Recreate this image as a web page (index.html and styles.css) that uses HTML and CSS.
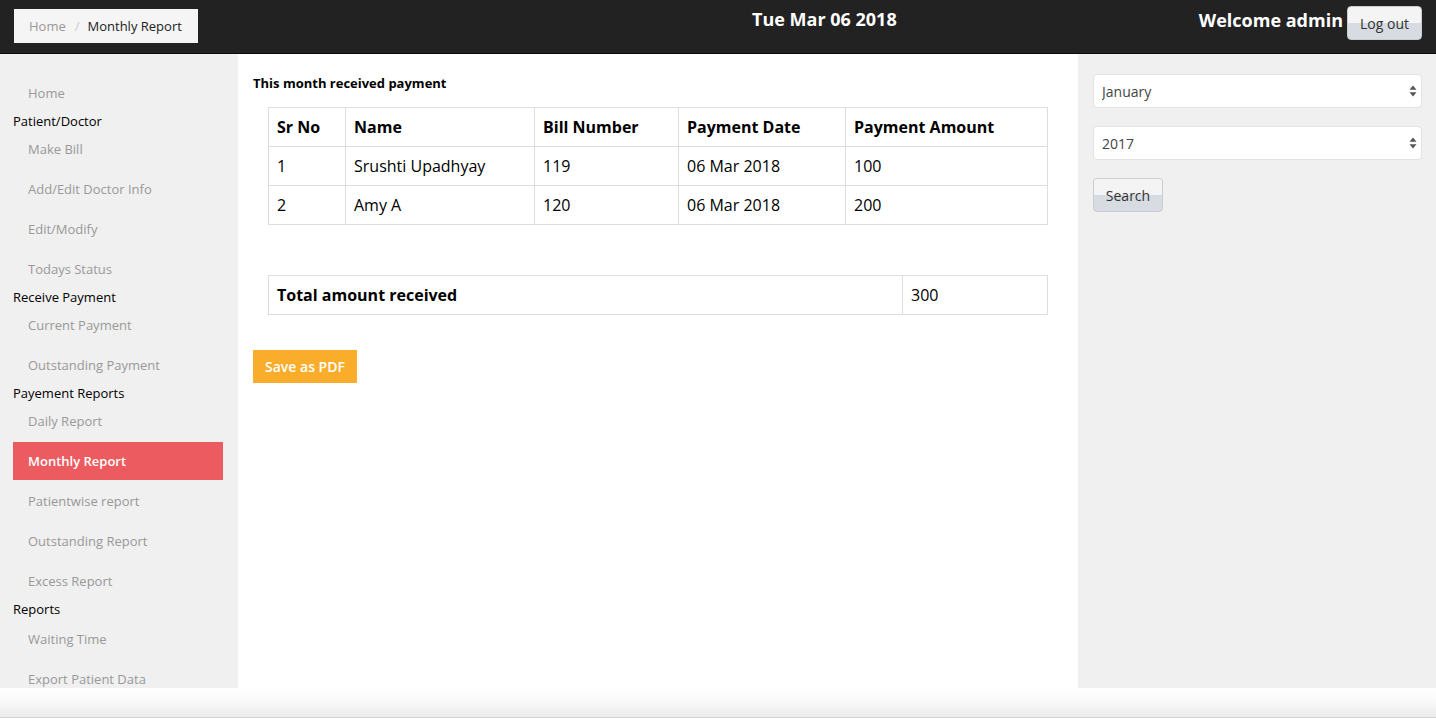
FILE: index.html
```html
<!DOCTYPE html>
<html>
<head>
<meta charset="utf-8">
<title>Monthly Report</title>
<link rel="stylesheet" href="styles.css">
</head>
<body>
<header class="topbar">
  <div class="crumb-col">
    <ol class="breadcrumb">
      <li class="crumb-link">Home</li>
      <li class="crumb-sep">/</li>
      <li class="crumb-active">Monthly Report</li>
    </ol>
  </div>
  <div class="today">Tue Mar 06 2018</div>
  <div class="user">
    <span class="welcome">Welcome admin</span>
    <button class="btn-grey btn-logout">Log out</button>
  </div>
</header>

<div class="layout">
  <nav class="sidebar">
    <a class="nav-link">Home</a>
    <div class="nav-head">Patient/Doctor</div>
    <a class="nav-link">Make Bill</a>
    <a class="nav-link">Add/Edit Doctor Info</a>
    <a class="nav-link">Edit/Modify</a>
    <a class="nav-link">Todays Status</a>
    <div class="nav-head">Receive Payment</div>
    <a class="nav-link">Current Payment</a>
    <a class="nav-link">Outstanding Payment</a>
    <div class="nav-head">Payement Reports</div>
    <a class="nav-link">Daily Report</a>
    <a class="nav-link active">Monthly Report</a>
    <a class="nav-link">Patientwise report</a>
    <a class="nav-link">Outstanding Report</a>
    <a class="nav-link">Excess Report</a>
    <div class="nav-head nav-head-last">Reports</div>
    <a class="nav-link">Waiting Time</a>
    <a class="nav-link">Export Patient Data</a>
  </nav>

  <main class="content">
    <h4 class="section-title">This month received payment</h4>
    <table class="grid-table payments">
      <colgroup>
        <col class="c-sr"><col class="c-name"><col class="c-bill"><col class="c-date"><col class="c-amt">
      </colgroup>
      <thead>
        <tr><th>Sr No</th><th>Name</th><th>Bill Number</th><th>Payment Date</th><th>Payment Amount</th></tr>
      </thead>
      <tbody>
        <tr><td>1</td><td>Srushti Upadhyay</td><td>119</td><td>06 Mar 2018</td><td>100</td></tr>
        <tr><td>2</td><td>Amy A</td><td>120</td><td>06 Mar 2018</td><td>200</td></tr>
      </tbody>
    </table>

    <table class="grid-table total">
      <colgroup><col class="c-label"><col class="c-value"></colgroup>
      <tr><th>Total amount received</th><td>300</td></tr>
    </table>

    <button class="btn-pdf">Save as PDF</button>
  </main>

  <aside class="filters">
    <div class="select-wrap">
      <select class="form-select"><option>January</option></select>
      <svg class="select-arrows" width="8" height="12" viewBox="0 0 8 12"><path d="M4 0.5 L7.5 4.8 H0.5 Z M4 11.5 L7.5 7.2 H0.5 Z" fill="#555"/></svg>
    </div>
    <div class="select-wrap">
      <select class="form-select"><option>2017</option></select>
      <svg class="select-arrows" width="8" height="12" viewBox="0 0 8 12"><path d="M4 0.5 L7.5 4.8 H0.5 Z M4 11.5 L7.5 7.2 H0.5 Z" fill="#555"/></svg>
    </div>
    <button class="btn-grey btn-search">Search</button>
  </aside>
</div>

<div class="page-end"></div>
</body>
</html>
```

FILE: styles.css
```css
* { box-sizing: border-box; }

html, body {
  margin: 0;
  padding: 0;
  height: 718px;
  overflow: hidden;
  background: #fff;
  font-family: "Open Sans", "Noto Sans", "Liberation Sans", sans-serif;
  color: #000;
}

/* ---------- top bar ---------- */
.topbar {
  height: 54px;
  background: #222;
  border-bottom: 1px solid #0b0b0b;
  display: flex;
  align-items: flex-start;
}

.crumb-col {
  width: 752px;
  padding: 9px 0 0 14px;
}

.breadcrumb {
  display: inline-flex;
  list-style: none;
  margin: 0;
  padding: 7px 16px 7px 15px;
  height: 34px;
  background: #f5f5f5;
  font-size: 13px;
  line-height: 20px;
}

.crumb-link { color: #999; }
.crumb-sep { color: #ccc; padding: 0 8px 0 9px; }
.crumb-active { color: #222; }

.today {
  color: #fff;
  font-weight: 700;
  font-size: 18px;
  line-height: 24px;
  padding-top: 7px;
}

.user {
  margin-left: auto;
  display: flex;
  align-items: flex-start;
  padding-right: 14px;
}

.welcome {
  color: #fff;
  font-weight: 700;
  font-size: 18px;
  line-height: 24px;
  padding-top: 8px;
  margin-right: 4px;
}

.btn-grey {
  font-family: inherit;
  font-size: 14px;
  color: #333;
  height: 34px;
  border: 1px solid #c9cdd1;
  border-radius: 4px;
  background: linear-gradient(#f4f4f4 0, #f4f4f4 50%, #d6dce1 50%, #d6dce1 100%);
  padding: 0 12px;
  cursor: pointer;
}

.btn-logout {
  margin-top: 6px;
  width: 75px;
  padding: 0;
}

/* ---------- layout ---------- */
.layout {
  display: flex;
  height: 634px;
  overflow: hidden;
}

.sidebar {
  width: 238px;
  flex: none;
  background: #f0f0f0;
  padding: 19px 15px 0 13px;
  display: flex;
  flex-direction: column;
}

.nav-link {
  display: block;
  height: 38px;
  margin: 1px 0;
  padding: 9px 15px;
  font-size: 13px;
  line-height: 20px;
  color: #999;
  flex: none;
}

.nav-link.active {
  background: #ec5b60;
  color: #fff;
  font-weight: 600;
}

.nav-head {
  font-size: 13px;
  line-height: 16px;
  color: #000;
  flex: none;
}

.nav-head-last { padding-bottom: 2px; }

/* ---------- main content ---------- */
.content {
  width: 840px;
  flex: none;
  background: #fff;
  padding: 20px 15px 0 15px;
}

.section-title {
  margin: 0 0 15px 0;
  font-size: 13px;
  line-height: 18px;
  font-weight: 700;
}

.grid-table {
  border-collapse: collapse;
  width: 779px;
  margin: 0 15px;
  table-layout: fixed;
  font-size: 16px;
  line-height: 22px;
}

.grid-table th,
.grid-table td {
  border: 1px solid #ddd;
  padding: 8px 8px;
  text-align: left;
  vertical-align: top;
}

.grid-table th { font-weight: 700; }
.grid-table td { font-weight: 400; }

.c-sr { width: 77px; }
.c-name { width: 189px; }
.c-bill { width: 144px; }
.c-date { width: 167px; }
.c-amt { width: 202px; }

.total { margin-top: 50px; }
.c-label { width: 634px; }
.c-value { width: 145px; }

.btn-pdf {
  margin-top: 35px;
  width: 104px;
  height: 33px;
  border: none;
  background: #f9ad2b;
  color: #fff;
  font-family: inherit;
  font-size: 14px;
  font-weight: 600;
  padding: 0;
}

/* ---------- right filters ---------- */
.filters {
  flex: 1;
  background: #f0f0f0;
  padding: 20px 14px 0 15px;
  display: flex;
  flex-direction: column;
  align-items: flex-start;
  gap: 18px;
}

.select-wrap {
  position: relative;
  width: 100%;
}

.form-select {
  -webkit-appearance: none;
  appearance: none;
  width: 100%;
  height: 34px;
  border: 1px solid #e2e2e2;
  border-radius: 4px;
  background: #fff;
  font-family: inherit;
  font-size: 14px;
  color: #444;
  padding: 0 8px;
}

.select-arrows {
  position: absolute;
  right: 5px;
  top: 11px;
  pointer-events: none;
}

.btn-search {
  width: 70px;
  padding: 0;
}

/* ---------- bottom window edge ---------- */
.page-end {
  height: 30px;
  background: linear-gradient(#fefefe 0, #fafafa 40%, #ececec 95%, #c9c9c9 100%);
}
```
